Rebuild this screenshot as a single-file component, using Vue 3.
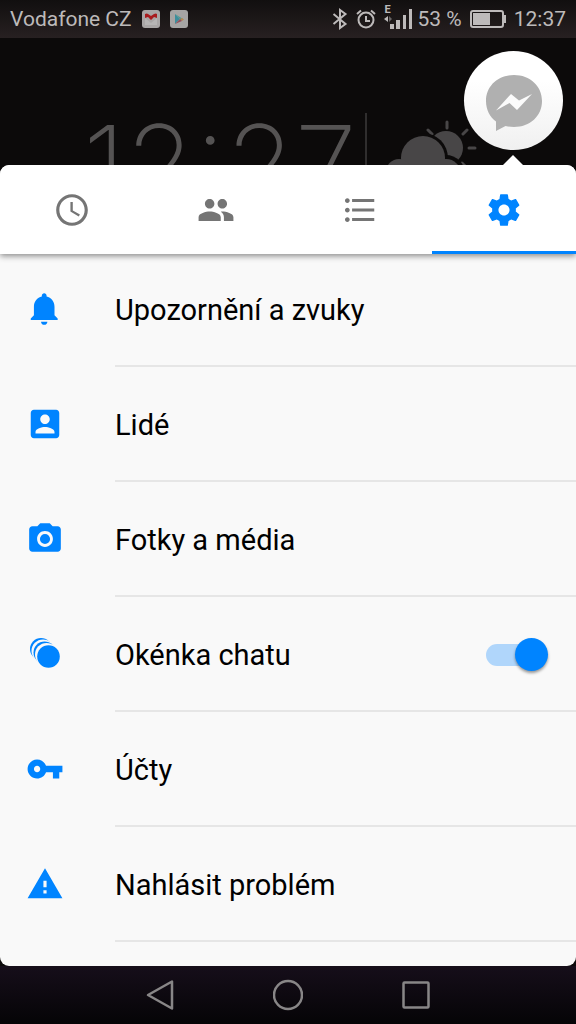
<script setup>
import { ref } from 'vue'

const tabs = [
  { id: 'recent', label: 'Nedávné', path: 'M11.99 2C6.47 2 2 6.48 2 12s4.47 10 9.99 10C17.52 22 22 17.52 22 12S17.52 2 11.99 2zM12 20c-4.42 0-8-3.58-8-8s3.58-8 8-8 8 3.58 8 8-3.58 8-8 8zm.5-13H11v6l5.25 3.15.75-1.23-4.5-2.67z' },
  { id: 'groups', label: 'Skupiny', path: 'M16 11c1.66 0 2.99-1.34 2.99-3S17.66 5 16 5s-3 1.34-3 3 1.34 3 3 3zm-8 0c1.66 0 2.99-1.34 2.99-3S9.66 5 8 5 5 6.34 5 8s1.34 3 3 3zm0 2c-2.33 0-7 1.17-7 3.5V19h14v-2.500c0-2.330-4.670-3.500-7-3.500zm8 0c-.29 0-.62.02-.97.05 1.16.84 1.97 1.97 1.97 3.450V19h6v-2.500c0-2.330-4.670-3.500-7-3.500z' },
  { id: 'list', label: 'Seznam', path: 'M4 10.500c-.83 0-1.500.67-1.500 1.500s.67 1.500 1.500 1.500 1.500-.67 1.500-1.500-.67-1.500-1.500-1.500zm0-6c-.83 0-1.500.67-1.500 1.500S3.170 7.500 4 7.500 5.500 6.830 5.500 6 4.830 4.500 4 4.500zm0 12c-.83 0-1.500.68-1.500 1.500s.68 1.500 1.500 1.500 1.500-.68 1.500-1.500-.67-1.500-1.500-1.500zM7 19h14v-2H7v2zm0-6h14v-2H7v2zm0-8v2h14V5H7z' },
  { id: 'settings', label: 'Nastavení', path: 'M19.430 12.980c.04-.32.07-.64.07-.98s-.03-.66-.07-.98l2.110-1.650c.19-.15.24-.42.12-.64l-2-3.460c-.12-.22-.39-.3-.61-.22l-2.490 1c-.52-.4-1.080-.73-1.690-.98l-.38-2.650C14.460 2.180 14.250 2 14 2h-4c-.25 0-.46.18-.49.42l-.38 2.650c-.61.25-1.170.59-1.690.98l-2.490-1c-.23-.09-.49 0-.61.22l-2 3.460c-.13.22-.07.49.12.64l2.110 1.650c-.04.32-.07.65-.07.98s.03.66.07.98l-2.110 1.650c-.19.15-.24.42-.12.64l2 3.460c.12.22.39.3.61.22l2.490-1c.52.4 1.080.73 1.690.98l.38 2.650c.03.24.24.42.49.42h4c.25 0 .46-.18.49-.42l.38-2.650c.61-.25 1.170-.59 1.690-.98l2.490 1c.23.09.49 0 .61-.22l2-3.460c.12-.22.07-.49-.12-.64l-2.110-1.650zM12 15.500c-1.930 0-3.500-1.570-3.500-3.500s1.570-3.500 3.500-3.500 3.500 1.570 3.500 3.500-1.570 3.500-3.500 3.500z' }
]

const rows = [
  { id: 'notifications', label: 'Upozornění a zvuky', path: 'M11.500 22c1.100 0 2-.9 2-2h-4c0 1.100.9 2 2 2zm6.500-6v-5.500c0-3.070-2.130-5.640-5-6.320V3.500c0-.83-.67-1.500-1.500-1.500S10 2.670 10 3.500v.68c-2.870.68-5 3.250-5 6.320V16l-2 2v1h17v-1l-2-2z' },
  { id: 'people', label: 'Lidé', path: 'M3 5v14c0 1.100.89 2 2 2h14c1.100 0 2-.9 2-2V5c0-1.100-.9-2-2-2H5c-1.110 0-2 .9-2 2zm12 4c0 1.660-1.340 3-3 3s-3-1.340-3-3 1.340-3 3-3 3 1.340 3 3zm-9 8c0-2 4-3.100 6-3.100s6 1.100 6 3.100v1H6v-1z' },
  { id: 'media', label: 'Fotky a média', path: 'M9 2L7.170 4H4c-1.100 0-2 .9-2 2v12c0 1.100.9 2 2 2h16c1.100 0 2-.9 2-2V6c0-1.100-.9-2-2-2h-3.170L15 2H9zm3 15c-2.760 0-5-2.240-5-5s2.240-5 5-5 5 2.240 5 5-2.240 5-5 5zm0-1.800a3.200 3.200 0 1 0 0-6.400 3.200 3.200 0 0 0 0 6.400z' },
  { id: 'chatheads', label: 'Okénka chatu', toggle: true },
  { id: 'accounts', label: 'Účty', path: 'M12.650 10C11.830 7.670 9.610 6 7 6c-3.310 0-6 2.690-6 6s2.690 6 6 6c2.610 0 4.830-1.670 5.650-4H17v4h4v-4h2v-4H12.650zM7 14c-1.100 0-2-.9-2-2s.9-2 2-2 2 .9 2 2-.9 2-2 2z' },
  { id: 'report', label: 'Nahlásit problém', path: 'M1 21h22L12 2 1 21zm12-3h-2v-2h2v2zm0-4h-2v-4h2v4z' }
]

const activeTab = ref('settings')
const chatHeads = ref(true)
</script>

<template>
  <div class="screen">
    <header class="status">
      <span>Vodafone CZ</span>
      <svg class="app-icon" viewBox="0 0 18 18" aria-hidden="true">
        <rect width="18" height="18" rx="3" fill="#a9a6a6" />
        <path d="M3 8v7h12V8l-6 5z" fill="#b7b5b5" />
        <path d="M3 4q2-1 3 0l3 2 3-2q2-1 3 0v4l-3-1-3 3-3-3-3 1z" fill="#a81b1e" />
      </svg>
      <svg class="app-icon" viewBox="0 0 18 18" aria-hidden="true">
        <rect width="18" height="18" rx="3" fill="#a6a5a4" />
        <path d="M5 4v10l5-5z" fill="#3d8e9c" />
        <path d="M5 4l8 5-2 1z" fill="#4d9a92" />
        <path d="M10 9l2-1 2 1.500-2 1.500z" fill="#b58a51" />
        <path d="M5 14l5-5 2 2z" fill="#954f5b" />
      </svg>
      <div class="status-right">
        <svg width="16" height="22" viewBox="0 0 16 22" fill="none" stroke="#bdbaba" stroke-width="2" aria-hidden="true">
          <path d="M1.500 6l12 10L8 20V2l5.500 4-12 10" />
        </svg>
        <svg class="alarm" width="20" height="20" viewBox="0 0 20 20" fill="none" stroke="#bdbaba" stroke-width="2" aria-hidden="true">
          <circle cx="10" cy="11" r="7.500" />
          <path d="M10 7v5h4M1 5l4-3.500M19 5l-4-3.500" />
        </svg>
        <div class="signal">
          <span class="network">E</span>
          <svg width="29" height="22" viewBox="0 0 29 22" fill="#bdbaba" aria-hidden="true">
            <path d="M0 11l4-3v6z" /><path d="M5 8l3 3-3 3z" fill="#686565" />
            <path d="M6 16h4v5H6zM12 12h4v9h-4zM19 7h3v14h-3zM25 1h3v20h-3z" />
          </svg>
        </div>
        <span>53 %</span>
        <svg class="battery" width="36" height="18" viewBox="0 0 36 18" aria-hidden="true">
          <rect x="1" y="1" width="32" height="16" rx="2" fill="none" stroke="#bdbaba" stroke-width="2" />
          <path d="M3 3h17v12H3zM34 5h2v8h-2z" fill="#bdbaba" />
        </svg>
        <span>12:37</span>
      </div>
    </header>

    <section class="wallpaper">
      <div class="clock">12:27</div>
      <div class="rule"></div>
      <svg class="weather" width="96" height="50" viewBox="0 0 96 50" aria-hidden="true">
        <g stroke="#484647" stroke-width="3" stroke-linecap="round">
          <path d="M63 7v6M44 15l4 4M83 15l-4 4M85 33h6M78 48l4 4" />
        </g>
        <circle cx="62" cy="33" r="17" fill="#484647" />
        <circle cx="39" cy="43" r="25" fill="#0c0a0a" />
        <circle cx="62" cy="59" r="19" fill="#0c0a0a" />
        <circle cx="39" cy="43" r="22" fill="#484647" />
        <circle cx="15" cy="57" r="13" fill="#484647" />
        <circle cx="62" cy="59" r="15" fill="#484647" />
      </svg>
      <button class="chat-head" type="button" aria-label="Messenger">
        <svg width="58" height="58" viewBox="0 0 58 58" aria-hidden="true">
          <path d="M29 1C13 1 1 12 1 27c0 9 4 16 10 20.500V57l9.500-5c3 .8 5.500 1 8.500 1 16 0 28-11 28-26S45 1 29 1z" fill="#b0b0b0" />
          <path d="M11 36.500L26 20l8 6.500L47 20 32 36l-7.500-7z" fill="#fbfbfb" />
        </svg>
      </button>
      <div class="pointer"></div>
    </section>

    <main class="panel">
      <nav class="tabs" role="tablist">
        <button
          v-for="tab in tabs"
          :key="tab.id"
          class="tab"
          :class="{ active: activeTab === tab.id }"
          type="button"
          role="tab"
          :aria-selected="activeTab === tab.id"
          :aria-label="tab.label"
          @click="activeTab = tab.id"
        >
          <svg class="icon" viewBox="0 0 24 24" aria-hidden="true"><path :d="tab.path" /></svg>
        </button>
      </nav>

      <ul class="list">
        <li v-for="row in rows" :key="row.id">
          <div v-if="row.toggle" class="row">
            <svg class="icon" viewBox="0 0 38 38" aria-hidden="true">
              <circle cx="15" cy="14" r="11" />
              <circle cx="17" cy="16" r="11.500" fill="#f9f9f9" />
              <circle cx="18.500" cy="17.500" r="11" />
              <circle cx="20.500" cy="19.500" r="11.500" fill="#f9f9f9" />
              <circle cx="22.500" cy="21.500" r="11.300" />
            </svg>
            <label class="label" :for="row.id">{{ row.label }}</label>
            <input :id="row.id" v-model="chatHeads" class="switch" type="checkbox" role="switch" />
          </div>
          <button v-else class="row" type="button">
            <svg class="icon" viewBox="0 0 24 24" aria-hidden="true"><path :d="row.path" /></svg>
            <span class="label">{{ row.label }}</span>
          </button>
        </li>
      </ul>
    </main>

    <footer class="navbar">
      <button type="button" aria-label="Zpět">
        <svg width="30" height="32" viewBox="0 0 30 32"><path d="M27 2.500v27L3 16z" /></svg>
      </button>
      <button type="button" aria-label="Domů">
        <svg width="30" height="32" viewBox="0 0 30 32"><circle cx="15" cy="16" r="14" /></svg>
      </button>
      <button type="button" aria-label="Přehled">
        <svg width="30" height="32" viewBox="0 0 30 32"><rect x="2.500" y="3.500" width="25" height="25" rx="1" /></svg>
      </button>
    </footer>
  </div>
</template>

<style>
body {
  background: #0c0a0a;
}
</style>

<style scoped>
.screen {
  display: flex;
  flex-direction: column;
  height: 100vh;
  overflow: hidden;
  font-family: Roboto, "Noto Sans", sans-serif;
  background: #0c0a0a;
}

button {
  border: 0;
  padding: 0;
  background: none;
  font: inherit;
  color: inherit;
  cursor: pointer;
}

svg {
  display: block;
  flex: none;
}

.status {
  display: flex;
  align-items: center;
  flex: none;
  height: 38px;
  padding: 0 10px;
  font-size: 21px;
  line-height: 38px;
  white-space: nowrap;
  color: #bdbaba;
  background: linear-gradient(#110f0f, #272021);
}

.app-icon {
  width: 18px;
  height: 18px;
  margin-left: 10px;
}

.status-right {
  display: flex;
  align-items: center;
  margin-left: auto;
}

.alarm {
  margin-left: 8px;
}

.signal {
  position: relative;
  margin: 0 5px 0 8px;
}

.network {
  position: absolute;
  top: -3px;
  left: 1px;
  font-size: 11px;
  font-weight: 700;
  line-height: 10px;
}

.battery {
  margin: 0 8px;
}

.wallpaper {
  position: relative;
  display: flex;
  flex: none;
  height: 127px;
}

.clock {
  width: 282px;
  height: 127px;
  margin-left: 83px;
  overflow: hidden;
  font-family: Inter, Roboto, sans-serif;
  font-size: 112px;
  font-weight: 200;
  line-height: 254px;
  white-space: nowrap;
  color: #555353;
}

.rule {
  width: 2px;
  margin-top: 75px;
  background: #302e2e;
}

.weather {
  align-self: flex-end;
  margin-left: 17px;
}

.chat-head {
  position: absolute;
  top: 13px;
  right: 13px;
  display: grid;
  place-items: center;
  width: 99px;
  height: 99px;
  padding-top: 4px;
  border-radius: 50%;
  background: linear-gradient(#ffffff 30%, #f0f0f0);
}

.pointer {
  position: absolute;
  right: 53px;
  bottom: 0;
  width: 20px;
  height: 10px;
  background: #ffffff;
  clip-path: polygon(50% 0, 100% 100%, 0 100%);
}

.panel {
  flex: 1;
  min-height: 0;
  overflow: hidden;
  border-radius: 9px;
  background: #f9f9f9;
}

.tabs {
  position: relative;
  z-index: 1;
  display: flex;
  height: 89px;
  background: #ffffff;
  box-shadow: 0 2px 6px rgba(0, 0, 0, 0.45);
}

.tab {
  display: grid;
  flex: 1;
  place-items: center;
  color: #757575;
  border-bottom: 3px solid transparent;
  border-top: 3px solid transparent;
}

.tab.active {
  color: #0084ff;
  border-bottom-color: #0084ff;
}

.icon {
  width: 38px;
  height: 38px;
  fill: currentColor;
}

.list {
  margin: -2px 0 0;
  padding: 0;
  list-style: none;
}

.row {
  position: relative;
  display: flex;
  align-items: center;
  box-sizing: border-box;
  width: 100%;
  height: 115px;
  padding: 0 30px 0 26px;
  text-align: left;
  color: #0084ff;
}

.row .icon {
  margin-bottom: 2px;
}

.row::after {
  content: "";
  position: absolute;
  right: 0;
  bottom: 0;
  left: 115px;
  height: 2px;
  background: #e6e6e6;
}

.label {
  flex: 1;
  margin-left: 51px;
  font-size: 29px;
  line-height: 36px;
  color: #000000;
}

.switch {
  display: flex;
  align-items: center;
  width: 60px;
  height: 22px;
  margin: 0;
  appearance: none;
  border-radius: 11px;
  background: #c8c8c8;
}

.switch::after {
  content: "";
  width: 33px;
  height: 33px;
  flex: none;
  border-radius: 50%;
  background: #f1f1f1;
  box-shadow: 0 2px 3px rgba(0, 0, 0, 0.4);
}

.switch:checked {
  background: #b0d6fb;
}

.switch:checked::after {
  margin-left: 29px;
  background: #0084ff;
}

.navbar {
  display: flex;
  align-items: center;
  justify-content: center;
  gap: 98px;
  flex: none;
  height: 58px;
  background: linear-gradient(#160e1a, #050406);
}

.navbar svg {
  fill: none;
  stroke: #888687;
  stroke-width: 2.500px;
  stroke-linejoin: round;
}
</style>
